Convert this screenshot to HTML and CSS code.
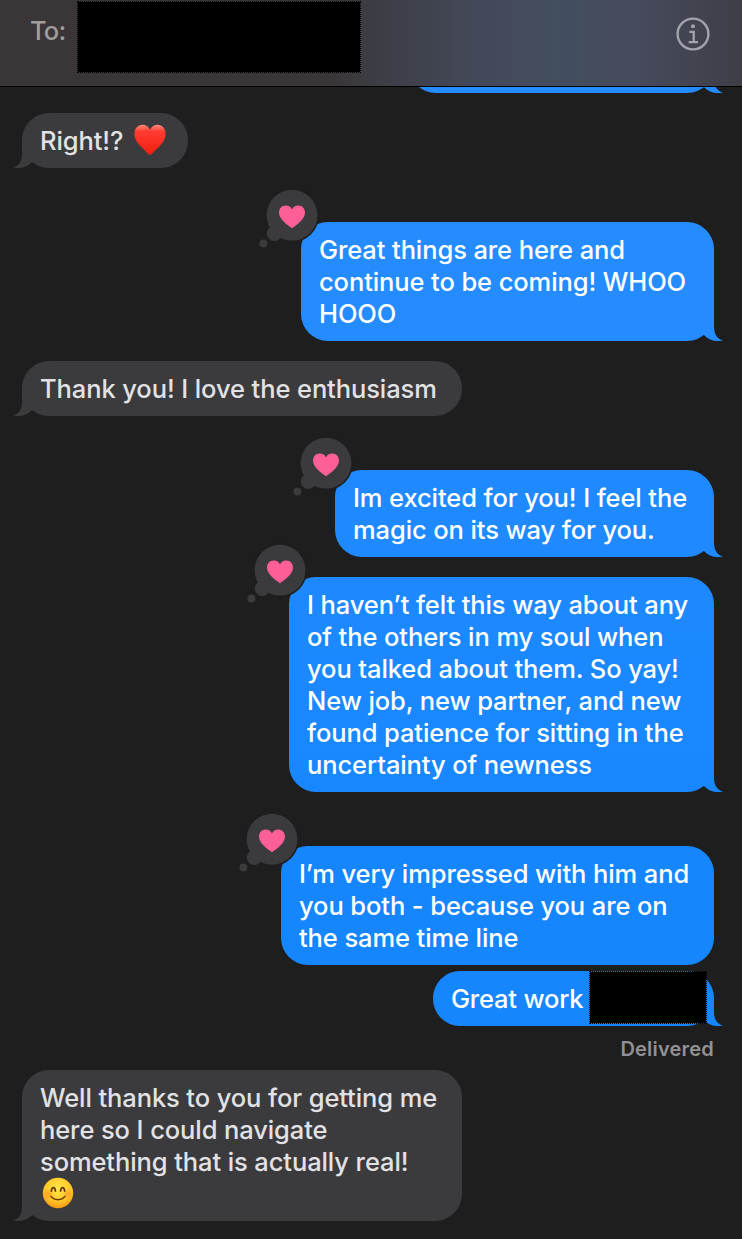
FILE: index.html
```
<!DOCTYPE html>
<html lang="en">
<head>
  <meta charset="UTF-8">
  <meta name="viewport" content="width=device-width, initial-scale=1.0">
  <title>Messages</title>
  <link rel="stylesheet" href="styles.css">
</head>
<body>
  <!-- shared shapes -->
  <svg class="defs" width="0" height="0">
    <defs>
      <symbol id="tail" viewBox="0 0 29 36">
        <path d="M0 21 V0 H20 V22 C20 29 23 34 29 35.6 C22 37 15 35.5 10 30 Z"/>
      </symbol>
      <symbol id="reaction" viewBox="0 0 64 66">
        <circle cx="35" cy="31.2" r="27" fill="#1e1e1e"/>
        <circle cx="35" cy="31.2" r="25.4" fill="#3b3b3d"/>
        <circle cx="17.3" cy="49.5" r="7.5" fill="#3b3b3d"/>
        <circle cx="6.4" cy="59.6" r="4" fill="#3b3b3d"/>
        <path fill="#ff5f97" d="M35 44.2 C30 41 22 35.2 22 28.6 C22 24.4 25 21.6 28.6 21.6 C31.5 21.6 34 23 35 25.6 C36 23 38.5 21.6 41.4 21.6 C45 21.6 48 24.4 48 28.6 C48 35.2 40 41 35 44.2 Z"/>
      </symbol>
    </defs>
  </svg>

  <header class="header">
    <span class="to">To:</span>
    <div class="redacted redacted-name"></div>
    <svg class="info" width="34" height="34" viewBox="0 0 34 34" fill="none" stroke="#a3a3ae">
      <circle cx="17" cy="17" r="15.4" stroke-width="2.4"/>
      <circle cx="17" cy="9.2" r="2" fill="#a3a3ae" stroke="none"/>
      <path stroke-width="2.3" d="M13.4 14.9 H17.7 V24.6 M12.6 25.1 H22"/>
    </svg>
  </header>

  <main class="chat">
    <div class="bubble sent w-cut"><svg class="tail"><use href="#tail"/></svg></div>

    <div class="bubble received w-right">
      <svg class="tail"><use href="#tail"/></svg>
      <span class="text">Right!?</span>
      <svg class="emoji heart" width="32" height="32" viewBox="0 0 32 32">
        <defs>
          <linearGradient id="red" x1="0" y1="0" x2="0" y2="1">
            <stop offset="0" stop-color="#ff8a80"/>
            <stop offset=".22" stop-color="#ff3b30"/>
            <stop offset="1" stop-color="#f0200f"/>
          </linearGradient>
        </defs>
        <path fill="url(#red)" d="M16 31 C14.5 31 12.5 28 8.5 24.3 C3.5 19.7 .4 15 .4 9.6 C.4 4.3 4 .8 8.4 .8 C12 .8 14.8 2.8 16 6 C17.2 2.8 20 .8 23.6 .8 C28 .8 31.6 4.3 31.6 9.6 C31.6 15 28.5 19.7 23.5 24.3 C19.5 28 17.5 31 16 31 Z"/>
      </svg>
    </div>

    <div class="bubble sent gap w-great">
      <svg class="tail"><use href="#tail"/></svg>
      <svg class="reaction"><use href="#reaction"/></svg>
      <span class="text">Great things are here and<br>
      continue to be coming! WHOO<br>
      HOOO</span>
    </div>

    <div class="bubble received w-full">
      <svg class="tail"><use href="#tail"/></svg>
      <span class="text">Thank you! I love the enthusiasm</span>
    </div>

    <div class="bubble sent gap tone-2 w-excited">
      <svg class="tail"><use href="#tail"/></svg>
      <svg class="reaction"><use href="#reaction"/></svg>
      <span class="text">Im excited for you! I feel the<br>
      magic on its way for you.</span>
    </div>

    <div class="bubble sent tone-3 w-felt">
      <svg class="tail"><use href="#tail"/></svg>
      <svg class="reaction"><use href="#reaction"/></svg>
      <span class="text">I haven’t felt this way about any<br>
      of the others in my soul when<br>
      you talked about them. So yay!<br>
      New job, new partner, and new<br>
      found patience for sitting in the<br>
      uncertainty of newness</span>
    </div>

    <div class="bubble sent gap tone-4 w-impressed">
      <svg class="reaction"><use href="#reaction"/></svg>
      <span class="text">I’m very impressed with him and<br>
      you both - because you are on<br>
      the same time line</span>
    </div>

    <div class="bubble sent close tone-4 w-work">
      <svg class="tail"><use href="#tail"/></svg>
      <span class="text work">Great work</span>
      <div class="redacted redacted-word"></div>
    </div>
    <p class="status">Delivered</p>

    <div class="bubble received w-full">
      <svg class="tail"><use href="#tail"/></svg>
      <span class="text">Well thanks to you for getting me<br>
      here so I could navigate<br>
      something that is actually real!</span><br>
      <svg class="emoji smile" width="32" height="32" viewBox="0 0 32 32">
        <defs>
          <radialGradient id="yellow" cx=".5" cy=".35" r=".65">
            <stop offset="0" stop-color="#ffe84a"/>
            <stop offset=".6" stop-color="#ffcb2b"/>
            <stop offset="1" stop-color="#f59a16"/>
          </radialGradient>
          <radialGradient id="blush">
            <stop offset="0" stop-color="#ff7a20" stop-opacity=".5"/>
            <stop offset="1" stop-color="#ff7a20" stop-opacity="0"/>
          </radialGradient>
        </defs>
        <circle cx="16" cy="16" r="15.2" fill="url(#yellow)"/>
        <circle cx="6.5" cy="17" r="5.5" fill="url(#blush)"/>
        <circle cx="25.5" cy="17" r="5.5" fill="url(#blush)"/>
        <path d="M9.4 14 C9.8 9.6 13 9.6 13.4 14 M18.6 14 C19 9.6 22.2 9.6 22.6 14" fill="none" stroke="#69380b" stroke-width="1.8" stroke-linecap="round"/>
        <path d="M9 19.4 C12.5 23.8 19.5 23.8 23 19.4" fill="none" stroke="#69380b" stroke-width="1.5" stroke-linecap="round"/>
      </svg>
    </div>
  </main>
</body>
</html>
```
FILE: styles.css
```
body {
  margin: 0;
  width: 742px;
  height: 1239px;
  overflow: hidden;
  background-color: #1e1e1e;
  color: #e2e2e4;
  font-family: Inter, "Liberation Sans", sans-serif;
  font-size: 25.5px;
  font-weight: 500;
  letter-spacing: -0.1px;
  line-height: 32px;
}

.defs {
  position: absolute;
}

.header {
  display: flex;
  align-items: flex-start;
  box-sizing: border-box;
  height: 87px;
  padding: 1px 32px 0 30px;
  border-bottom: 1px solid #000;
  background: linear-gradient(90deg, #3a3536 0, #3a3536 330px, #3c3e45 380px, #44495a 480px, #424e5f 570px, #464a5c 640px, #3e3e46 742px);
}

.to {
  width: 47px;
  margin-top: 14px;
  color: #a09d9e;
  letter-spacing: -0.8px;
}

.redacted {
  box-sizing: border-box;
  flex-shrink: 0;
  border: 1px dotted #000;
  background-color: #000;
  background-clip: padding-box;
}

.redacted-name {
  width: 284px;
  height: 72px;
}

.info {
  margin: 16px 0 0 auto;
}

.chat {
  display: flex;
  flex-direction: column;
  height: 1152px;
  overflow: hidden;
}

.bubble {
  position: relative;
  box-sizing: border-box;
  flex-shrink: 0;
  margin-bottom: 20px;
  padding: 11px 18px 12px;
  border-radius: 27px;
  white-space: nowrap;
}

/* sits the type a pixel lower in its line */
.text {
  position: relative;
  top: 1px;
}

.sent {
  align-self: flex-end;
  margin-right: 28px;
  background-color: #258cff;
  color: #fff;
  fill: #258cff;
}

.received {
  align-self: flex-start;
  margin-left: 22px;
  background-color: #3b3b3d;
  fill: #3b3b3d;
}

.gap {
  margin-top: 34px;
}

.tone-2 {
  background-color: #1f89ff;
  fill: #1f89ff;
}

.tone-3 {
  background: linear-gradient(#1e89ff, #1887ff);
  fill: #1887ff;
}

.tone-4 {
  background-color: #1686ff;
  fill: #1686ff;
}

.tail {
  position: absolute;
  right: -9px;
  bottom: 0;
  width: 29px;
  height: 36px;
  clip-path: inset(8px 0 0 9px);
}

.received .tail {
  right: auto;
  left: -9px;
  transform: scaleX(-1);
}

.reaction {
  position: absolute;
  left: -44px;
  top: -38px;
  width: 64px;
  height: 66px;
}

.w-cut {
  width: 305px;
  height: 55px;
  margin-top: -49px;
}

.w-right {
  width: 166px;
}

.w-great {
  width: 413px;
}

.w-full {
  width: 440px;
}

.w-excited {
  width: 379px;
}

.w-felt {
  width: 425px;
}

.w-impressed {
  width: 433px;
}

.w-work {
  display: flex;
  width: 281px;
  height: 55px;
}

.work {
  width: 132px;
  letter-spacing: -0.2px;
}

.close {
  margin-top: -14px;
  margin-bottom: 0;
}

.redacted-word {
  position: relative;
  width: 118px;
  height: 53px;
  margin: -11px 0 0 6px;
}

.status {
  align-self: flex-end;
  margin: 7px 28px 5px 0;
  color: #929294;
  font-size: 20px;
  font-weight: 600;
  letter-spacing: 0.2px;
}

.emoji {
  vertical-align: top;
}

.heart {
  margin-left: 4px;
}

.smile {
  margin-left: 2px;
}
```
